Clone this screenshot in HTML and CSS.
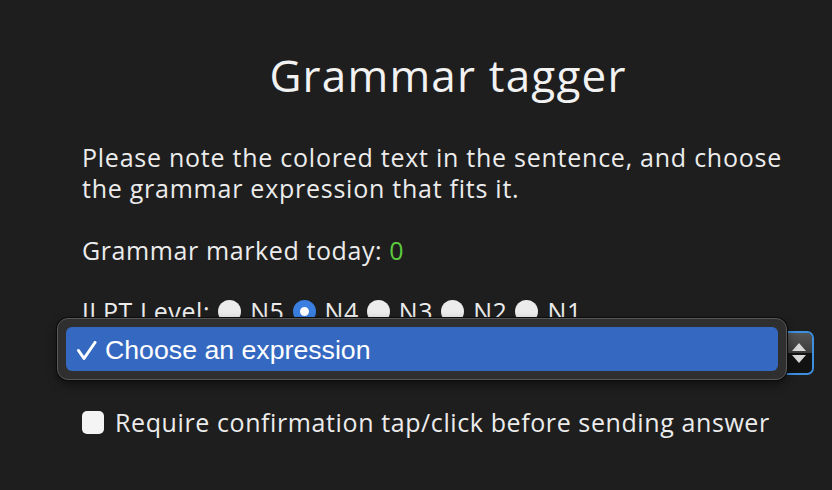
FILE: index.html
```html
<!DOCTYPE html>
<html lang="en">
<head>
    <meta charset="UTF-8">
    <meta name="viewport" content="width=device-width, initial-scale=1.0">
    <title>Grammar tagger</title>
    <link rel="stylesheet" href="styles.css">
</head>
<body>
    <div class="container">
        <h1>Grammar tagger</h1>

        <p class="intro">Please note the colored text in the sentence, and choose the grammar expression that fits it.</p>

        <p class="count">Grammar marked today: <span class="count-num">0</span></p>

        <div class="levels">
            <span>JLPT Level:</span>
            <label class="level"><span class="radio"></span>N5</label>
            <label class="level"><span class="radio checked"></span>N4</label>
            <label class="level"><span class="radio"></span>N3</label>
            <label class="level"><span class="radio"></span>N2</label>
            <label class="level"><span class="radio"></span>N1</label>
        </div>

        <div class="select-wrap">
            <div class="select">
                <div class="select-arrows">
                    <span class="arr-up"></span>
                    <span class="arr-down"></span>
                </div>
            </div>
            <!-- open native menu -->
            <div class="menu">
                <div class="menu-item">
                    <svg class="tick" width="20" height="20" viewBox="0 0 20 20">
                        <path d="M1.5 9.5 L7 17.5 L18 1.5" fill="none" stroke="#fff" stroke-width="3" stroke-linecap="round" stroke-linejoin="round"/>
                    </svg>
                    <span>Choose an expression</span>
                </div>
            </div>
        </div>

        <label class="confirm">
            <span class="checkbox"></span>
            Require confirmation tap/click before sending answer
        </label>
    </div>
</body>
</html>
```

FILE: styles.css
```css
body {
    background-color: #1e1e1e;
    font-family: "Open Sans", sans-serif;
    color: #ececec;
    margin: 0;
    padding: 0;
}

.container {
    padding: 0 18px 0 82px;
    font-size: 25px;
    letter-spacing: 0.6px;
}

h1 {
    font-size: 44px;
    letter-spacing: 1.2px;
    font-weight: 500;
    text-align: center;
    margin: 0;
    padding-top: 46px;
    line-height: 58px;
    color: #f2f2f2;
}

.intro {
    line-height: 31px;
    letter-spacing: 0.75px;
    margin: 38px 0 0 0;
}

.count {
    line-height: 31px;
    margin: 31px 0 0 0;
}

.count-num {
    color: #5ccb3f;
}

.levels {
    display: flex;
    align-items: center;
    line-height: 31px;
    margin-top: 30px;
    height: 31px;
}

.level {
    display: flex;
    align-items: center;
}

.radio {
    width: 23px;
    height: 23px;
    border-radius: 50%;
    background: #ececec;
    margin: 0 9px 0 8px;
    box-sizing: border-box;
}

.radio.checked {
    background: #fff;
    border: 7px solid #3a7fe0;
}

.select-wrap {
    position: relative;
    margin-top: 4px;
    height: 44px;
}

.select {
    height: 44px;
    box-sizing: border-box;
    border: 2px solid #3d8fe0;
    border-radius: 7px;
    background: #2a2a2a;
    display: flex;
    justify-content: flex-end;
}

.select-arrows {
    width: 26px;
    display: flex;
    flex-direction: column;
    justify-content: center;
    align-items: center;
    gap: 4px;
    background: linear-gradient(#555 0%, #3c3c3c 50%, #121212 50%, #121212 100%);
    border-radius: 0 5px 5px 0;
}

.arr-up {
    border-left: 7px solid transparent;
    border-right: 7px solid transparent;
    border-bottom: 8px solid #d8d8d8;
}

.arr-down {
    border-left: 7px solid transparent;
    border-right: 7px solid transparent;
    border-top: 8px solid #d8d8d8;
}

.menu {
    position: absolute;
    left: -25px;
    top: -13px;
    width: 730px;
    height: 62px;
    box-sizing: border-box;
    padding: 8px;
    background: #2f2f2f;
    border: 1px solid #585858;
    border-radius: 11px;
    box-shadow: 0 0 0 1px #0c0c0c, 0 4px 10px rgba(0, 0, 0, 0.5);
}

.menu-item {
    height: 44px;
    display: flex;
    align-items: center;
    gap: 8px;
    border-radius: 6px;
    background: #3569c1;
    color: #fff;
    font-family: "Liberation Sans", Arial, sans-serif;
    font-size: 26.7px;
    letter-spacing: 0;
    padding-left: 11px;
}

.menu-item span {
    padding-top: 3px;
}

.tick {
    flex-shrink: 0;
    margin-top: 4px;
}

.confirm {
    display: flex;
    align-items: center;
    line-height: 31px;
    margin-top: 32px;
}

.checkbox {
    width: 22px;
    height: 23px;
    border-radius: 5px;
    background: #f4f4f4;
    margin: 0 11px 0 0;
}
```
